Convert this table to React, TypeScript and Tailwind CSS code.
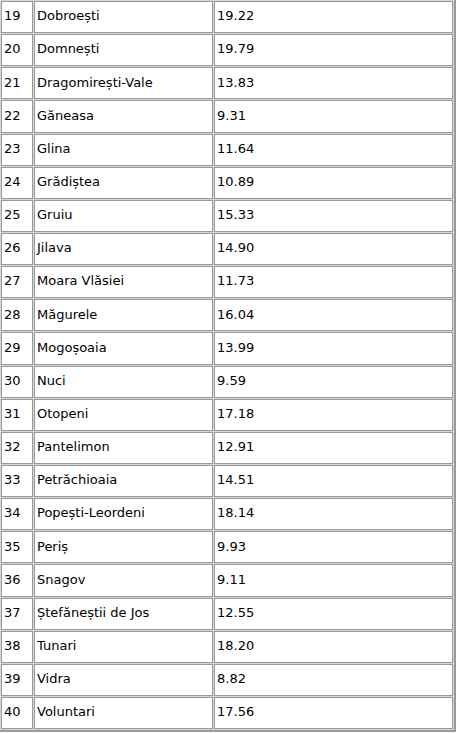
const rows: [number, string, string][] = [
  [19, "Dobroești", "19.22"],
  [20, "Domnești", "19.79"],
  [21, "Dragomirești-Vale", "13.83"],
  [22, "Găneasa", "9.31"],
  [23, "Glina", "11.64"],
  [24, "Grădiștea", "10.89"],
  [25, "Gruiu", "15.33"],
  [26, "Jilava", "14.90"],
  [27, "Moara Vlăsiei", "11.73"],
  [28, "Măgurele", "16.04"],
  [29, "Mogoșoaia", "13.99"],
  [30, "Nuci", "9.59"],
  [31, "Otopeni", "17.18"],
  [32, "Pantelimon", "12.91"],
  [33, "Petrăchioaia", "14.51"],
  [34, "Popești-Leordeni", "18.14"],
  [35, "Periș", "9.93"],
  [36, "Snagov", "9.11"],
  [37, "Ștefăneștii de Jos", "12.55"],
  [38, "Tunari", "18.20"],
  [39, "Vidra", "8.82"],
  [40, "Voluntari", "17.56"],
];

const cell = "border border-[#9a9a9a] bg-white h-[32.15px] px-[2px] pb-[2px] pt-0 align-middle text-left";

export default function App() {
  return (
    <div className="w-[456px] h-[733px] overflow-hidden bg-white">
      <table
        className="table-fixed w-[456px] border-separate border-spacing-[1px] bg-[#d6d6d6] border-r-2 border-b-2 border-[#9a9a9a] text-[13px] text-black"
        style={{ fontFamily: '"DejaVu Sans", Verdana, sans-serif' }}
      >
        <colgroup>
          <col className="w-[32px]" />
          <col className="w-[179px]" />
          <col />
        </colgroup>
        <tbody>
          {rows.map(([n, name, val]) => (
            <tr key={n}>
              <td className={cell}>{n}</td>
              <td className={cell}>{name}</td>
              <td className={cell}>{val}</td>
            </tr>
          ))}
        </tbody>
      </table>
    </div>
  );
}
